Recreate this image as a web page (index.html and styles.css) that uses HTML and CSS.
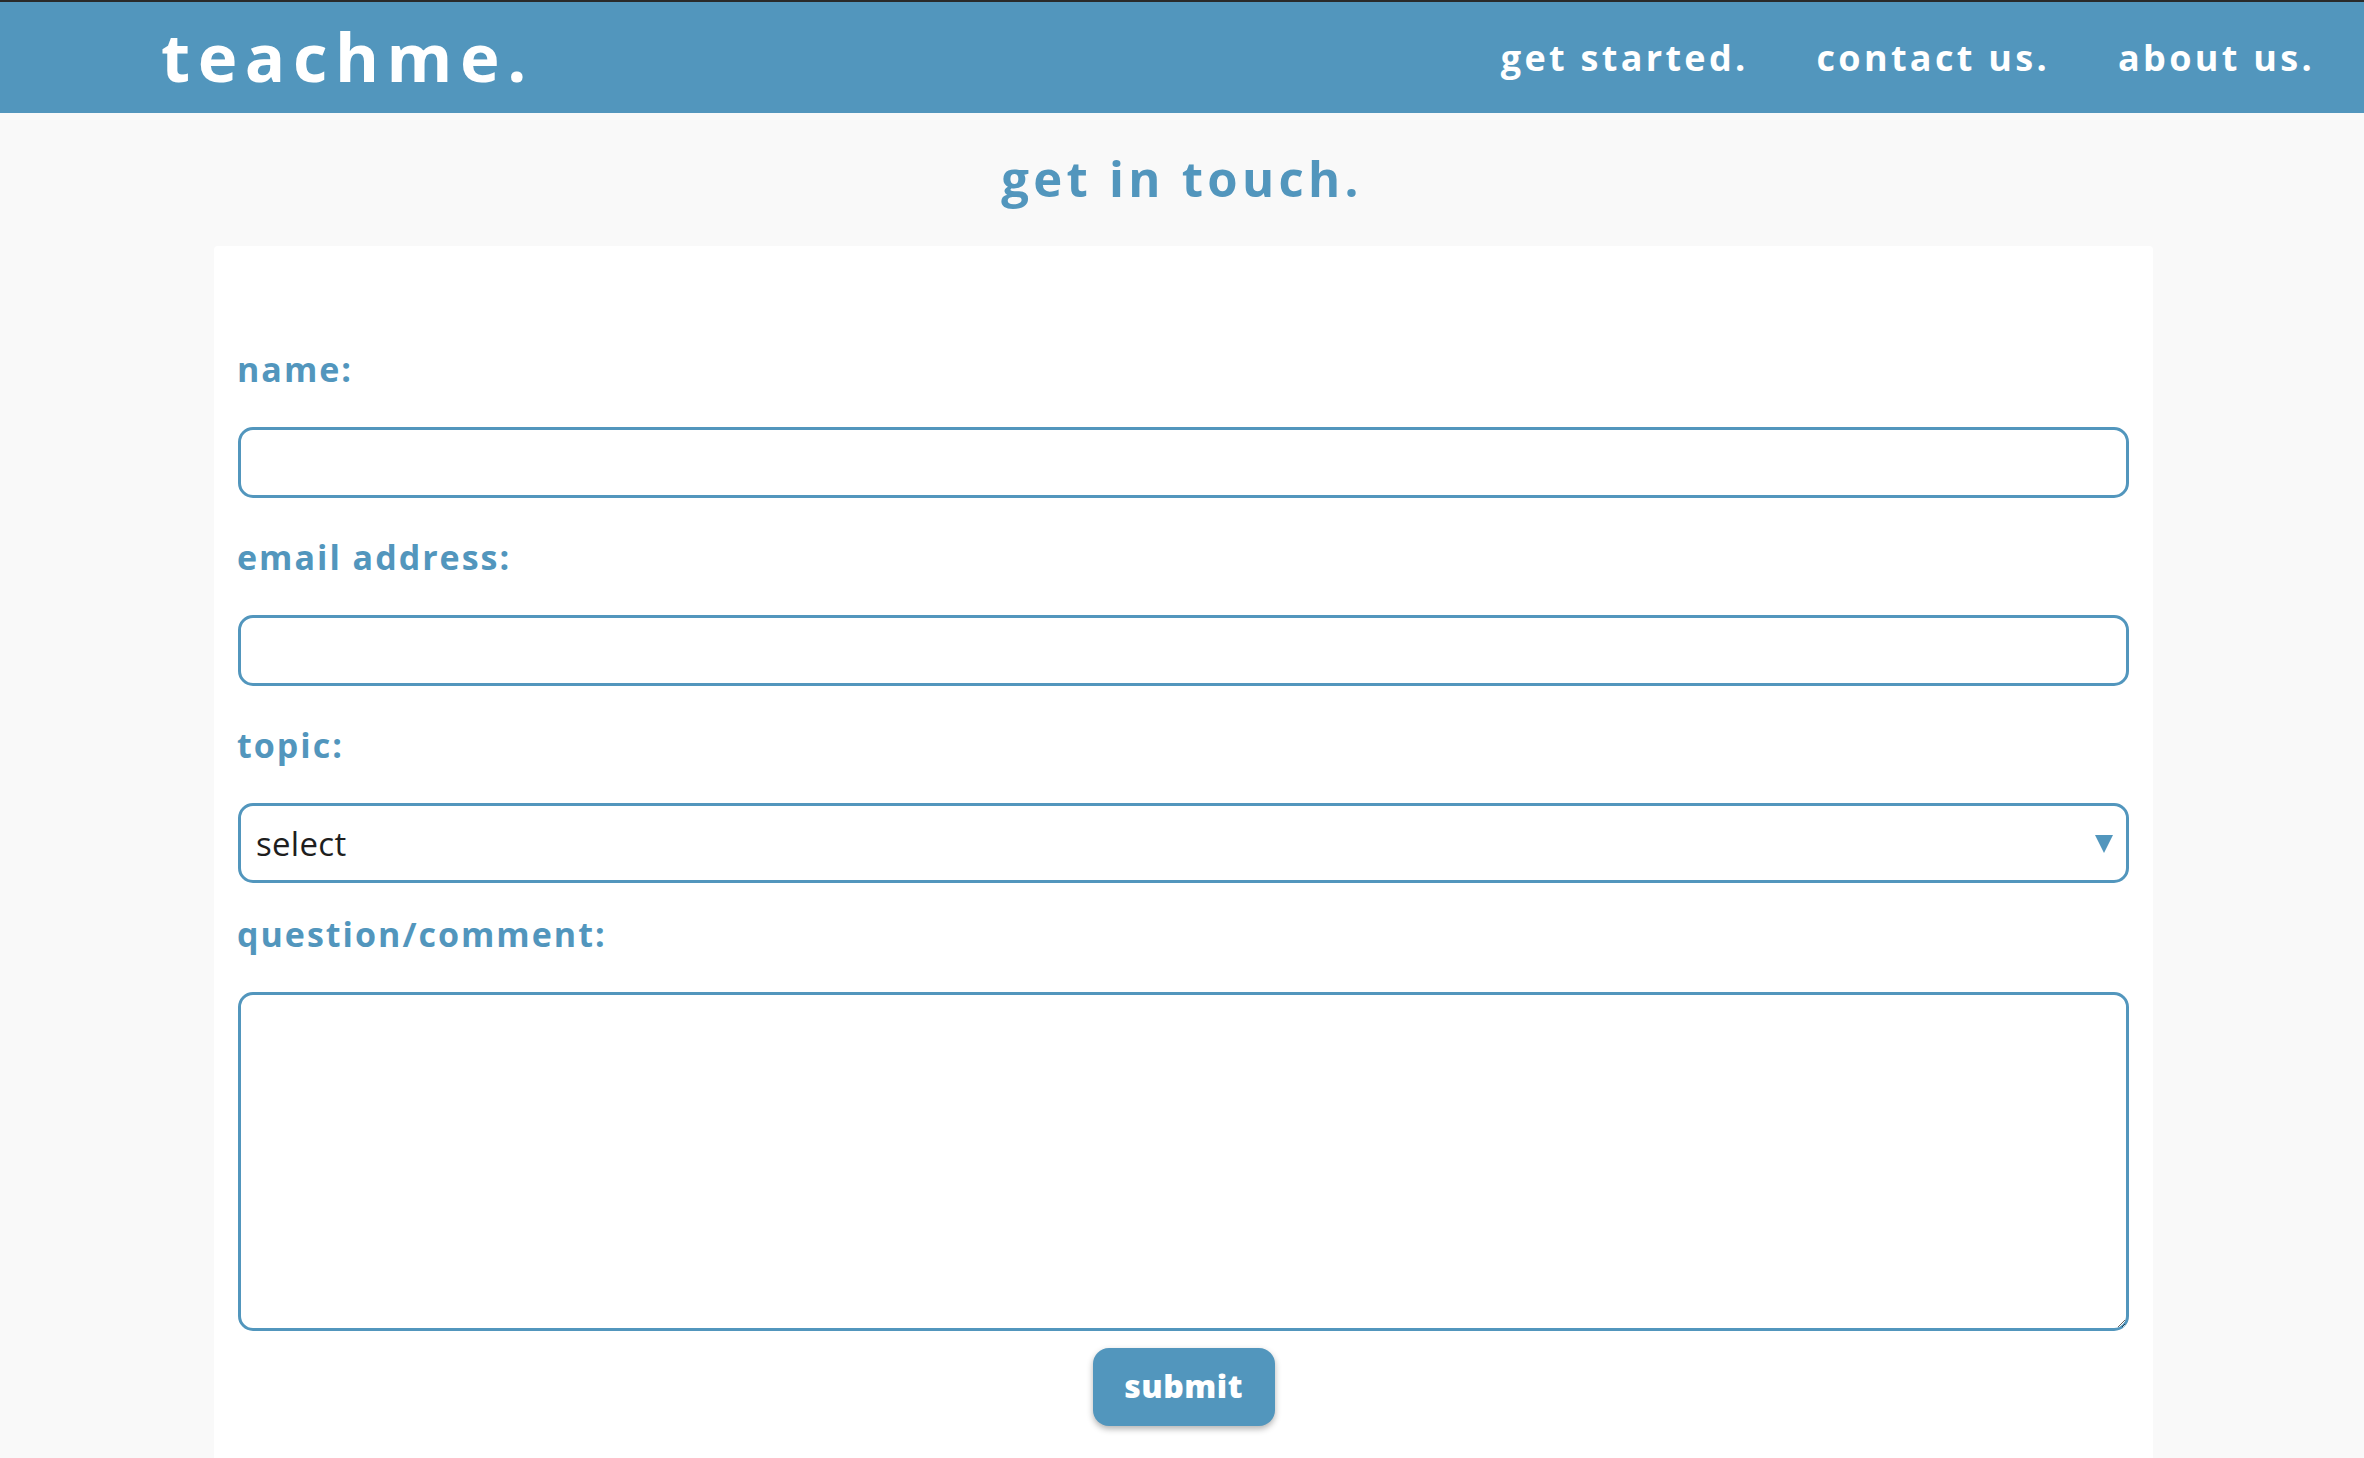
FILE: index.html
```html
<!DOCTYPE html>
<html lang="en">
<head>
<meta charset="utf-8">
<title>teachme. - contact us</title>
<link rel="stylesheet" href="styles.css">
</head>
<body>
<header class="topbar">
  <div class="logo">teachme.</div>
  <nav class="nav">
    <a class="nav-link" href="#">get started.</a>
    <a class="nav-link" href="#">contact us.</a>
    <a class="nav-link" href="#">about us.</a>
  </nav>
</header>
<main class="page">
  <h1 class="title">get in touch.</h1>
  <form class="card">
    <label class="label first" for="name">name:</label>
    <input class="field" id="name" type="text">
    <label class="label" for="email">email address:</label>
    <input class="field" id="email" type="email">
    <label class="label" for="topic">topic:</label>
    <div class="select-wrap">
      <select class="field select" id="topic">
        <option>select</option>
      </select>
      <svg class="select-arrow" viewBox="0 0 18 18" width="18" height="18"><polygon points="0,0 18,0 9,18" fill="#5296bd"/></svg>
    </div>
    <label class="label tight" for="comment">question/comment:</label>
    <textarea class="field area" id="comment"></textarea>
    <div class="actions">
      <button class="submit" type="button">submit</button>
    </div>
  </form>
</main>
</body>
</html>
```
FILE: styles.css
```css
* { box-sizing: border-box; }
html, body { margin: 0; padding: 0; }
body {
  background: #f9f9f9;
  font-family: "Open Sans", "Liberation Sans", sans-serif;
  color: #5296bd;
  height: 1458px;
  overflow: hidden;
}
.topbar {
  height: 113px;
  border-top: 2px solid #2a2a2a;
  background: #5296bd;
  display: flex;
  align-items: center;
  justify-content: space-between;
  padding: 0 49px 0 161px;
}
.logo {
  color: #fff;
  font-size: 67px;
  line-height: 67px;
  font-weight: 700;
  letter-spacing: 7.6px;
  position: relative;
  top: -1px;
}
.nav { display: flex; gap: 68px; }
.nav-link {
  color: #fff;
  text-decoration: none;
  font-size: 36px;
  line-height: 36px;
  font-weight: 700;
  letter-spacing: 3.3px;
}
.page { display: flex; flex-direction: column; }
.title {
  margin: 0;
  height: 133px;
  line-height: 130px;
  text-align: center;
  font-size: 49px;
  font-weight: 700;
  letter-spacing: 4.3px;
  color: #5296bd;
}
.card {
  width: 1939px;
  margin: 0 0 0 214px;
  min-height: 1212px;
  background: #fff;
  border-radius: 4px 4px 0 0;
  padding: 103px 24px 0 24px;
  display: flex;
  flex-direction: column;
}
.label {
  display: block;
  font-size: 34px;
  line-height: 40px;
  font-weight: 700;
  letter-spacing: 2px;
  color: #5296bd;
  margin: 39px 0 38px -1px;
}
.label.first { margin-top: 0; }
.label.tight { margin-top: 31px; }
.field {
  display: block;
  width: 100%;
  height: 71px;
  border: 3.5px solid #5296bd;
  border-radius: 15px;
  background: #fff;
  outline: none;
  font-family: "Open Sans", "Liberation Sans", sans-serif;
  font-size: 33px;
  letter-spacing: 0.3px;
  color: #1e1e1e;
  padding: 0 15px;
  margin: 0;
}
.select-wrap { position: relative; }
.select {
  height: 80px;
  appearance: none;
  -webkit-appearance: none;
}
.select-arrow {
  position: absolute;
  right: 16px;
  top: 32px;
  pointer-events: none;
}
.area {
  height: 339px;
  resize: both;
  padding: 14px 16px;
}
.actions {
  display: flex;
  justify-content: center;
  padding-top: 17px;
}
.submit {
  width: 182px;
  height: 78px;
  border: none;
  border-radius: 16px;
  background: #5296bd;
  color: #fff;
  font-family: "Open Sans", "Liberation Sans", sans-serif;
  font-size: 32px;
  font-weight: 800;
  letter-spacing: 0.5px;
  box-shadow: 0 3px 6px rgba(0, 0, 0, 0.3);
  padding: 0 0 4px 0;
  margin: 0;
}
```
